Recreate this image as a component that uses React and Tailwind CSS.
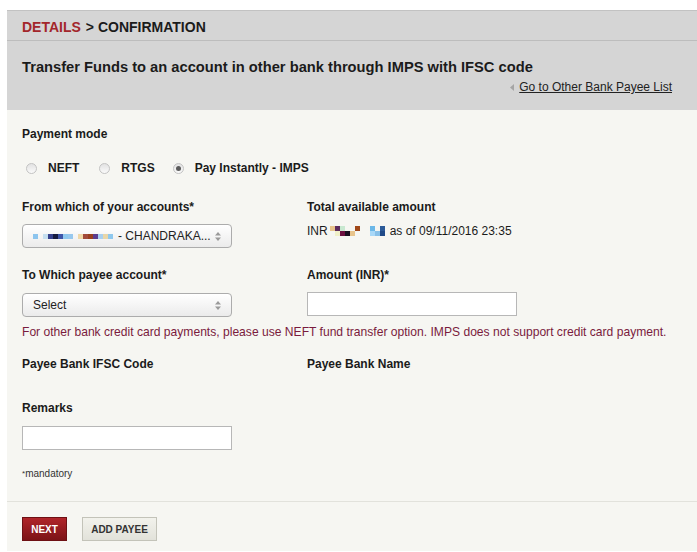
const font = { fontFamily: '"Liberation Sans", Arial, sans-serif' };

function Blocks({ colors }) {
  return (
    <span className="inline-flex items-center">
      {colors.map((c, i) =>
        c ? (
          <span key={i} className="inline-block w-[5px] h-[5px]" style={{ background: c }} />
        ) : (
          <span key={i} className="inline-block w-[5px] h-[5px]" />
        )
      )}
    </span>
  );
}

function Arrows() {
  return (
    <svg width="6" height="9" viewBox="0 0 6 9" className="shrink-0">
      <path d="M3 0 L6 3.5 L0 3.5 Z" fill="#9a9a9a" />
      <path d="M0 5.5 L6 5.5 L3 9 Z" fill="#9a9a9a" />
    </svg>
  );
}

function Radio({ checked }) {
  return (
    <span className="w-[11px] h-[11px] rounded-full border border-[#c3c3c3] bg-gradient-to-b from-[#e2e2e2] to-[#fafafa] flex items-center justify-center shrink-0">
      {checked && <span className="w-[5px] h-[5px] rounded-full bg-[#5a5a5a]" />}
    </span>
  );
}

function SelectBox({ children }) {
  return (
    <div className="w-[210px] h-[24px] rounded-[4px] border border-[#acacac] bg-gradient-to-b from-white to-[#ebebeb] flex items-center justify-between pl-[10px] pr-[10px] text-[12px] text-[#222] shadow-[inset_0_1px_0_#fff]">
      <span className="flex items-center">{children}</span>
      <Arrows />
    </div>
  );
}

export default function App() {
  return (
    <div className="w-[697px] h-[552px] bg-white pt-[10px] pl-[7px] overflow-hidden text-[#1b1b1b]" style={font}>
      <div className="border-t border-[#c2c2c2]">
        <div className="bg-[#d5d5d5]">
          <div className="h-[30px] border-b border-[#bdbdbd] flex items-center pt-[3px] pl-[15px] text-[14px] font-bold">
            <span className="text-[#a3262b]">DETAILS</span>
            <span className="ml-[5px]">&gt; CONFIRMATION</span>
          </div>
          <div className="h-[69px] pl-[15px] pr-[25px] pt-[16px]">
            <div className="text-[14.7px] font-bold leading-[20px]">
              Transfer Funds to an account in other bank through IMPS with IFSC code
            </div>
            <div className="flex justify-end items-center mt-[3px] text-[12px] leading-[14px]">
              <svg width="4" height="7" viewBox="0 0 4 7" className="mr-[5px]">
                <path d="M4 0 L0 3.5 L4 7 Z" fill="#a5a5a5" />
              </svg>
              <span className="underline text-[#222]">Go to Other Bank Payee List</span>
            </div>
          </div>
        </div>

        <div className="bg-[#f6f6f2] h-[441px]">
          <div className="pl-[15px] pt-[17px] pb-[21px] border-b border-[#e2e2dc] text-[12px] leading-[14px]">
            <div className="font-bold h-[14px]">Payment mode</div>

            <div className="flex items-center mt-[20px] h-[14px] font-bold">
              <span className="ml-[4px]"><Radio /></span>
              <span className="ml-[11px]">NEFT</span>
              <span className="ml-[20px]"><Radio /></span>
              <span className="ml-[11px]">RTGS</span>
              <span className="ml-[18px]"><Radio checked /></span>
              <span className="ml-[11px]">Pay Instantly - IMPS</span>
            </div>

            <div className="grid grid-cols-[285px_1fr] mt-[25px]">
              <div>
                <div className="font-bold h-[14px]">From which of your accounts*</div>
                <div className="mt-[10px]">
                  <SelectBox>
                    <Blocks colors={["#8cc4ee", null, "#c5dff0", "#35408c", "#151a40", "#3d55a8", "#8fc8ee", "#98c8ee", null, "#f0d8a8", "#a24a3a", "#993f1e", "#5b3c8e", "#a8d0f0", "#e8d6a8", "#8fc8ee"]} />
                    <span className="ml-[5px]">- CHANDRAKA...</span>
                  </SelectBox>
                </div>
              </div>
              <div>
                <div className="font-bold h-[14px]">Total available amount</div>
                <div className="mt-[10px] flex items-center h-[14px]">
                  <span>INR</span>
                  <span className="ml-[2px] flex items-center">
                    <span className="flex flex-col">
                      <Blocks colors={["#e8c48c", "#5c2a5c", "#c8e8d0", null, null, "#a04818", null, null, "#6cb8e8", null, "#2c5a98"]} />
                      <Blocks colors={[null, "#f0f0c8", "#6c1040", "#1a1020", "#e8c48c", null, null, null, "#a8d8f8", "#88c0e8", "#204a88"]} />
                    </span>
                  </span>
                  <span className="ml-[5px]">as of 09/11/2016 23:35</span>
                </div>
              </div>
            </div>

            <div className="grid grid-cols-[285px_1fr] mt-[20px]">
              <div>
                <div className="font-bold h-[14px]">To Which payee account*</div>
                <div className="mt-[11px]">
                  <SelectBox>Select</SelectBox>
                </div>
              </div>
              <div>
                <div className="font-bold h-[14px]">Amount (INR)*</div>
                <div className="mt-[10px] w-[210px] h-[24px] bg-white border border-[#b7b7b7]" />
              </div>
            </div>

            <div className="mt-[8px] h-[14px] text-[12.1px] text-[#7a1b3d]">
              For other bank credit card payments, please use NEFT fund transfer option. IMPS does not support credit card payment.
            </div>

            <div className="grid grid-cols-[285px_1fr] mt-[18px] font-bold">
              <div className="h-[14px]">Payee Bank IFSC Code</div>
              <div className="h-[14px]">Payee Bank Name</div>
            </div>

            <div className="mt-[30px] font-bold h-[14px]">Remarks</div>
            <div className="mt-[11px] w-[210px] h-[24px] bg-white border border-[#b7b7b7]" />

            <div className="mt-[18px] text-[10px] leading-[12px] h-[12px] text-[#333]">
              <span className="text-[8px] align-top">*</span>mandatory
            </div>
          </div>

          <div className="pl-[15px] pt-[15px] flex items-center gap-[15px]">
            <button className="w-[45px] h-[24px] border border-[#6e1014] bg-gradient-to-b from-[#b0252a] to-[#7c1317] text-white text-[10px] font-bold">
              NEXT
            </button>
            <button className="w-[75px] h-[24px] border border-[#c3c3b9] bg-gradient-to-b from-[#f2f2ec] to-[#e2e2da] text-[#333] text-[10px] font-bold">
              ADD PAYEE
            </button>
          </div>
        </div>
      </div>
    </div>
  );
}
